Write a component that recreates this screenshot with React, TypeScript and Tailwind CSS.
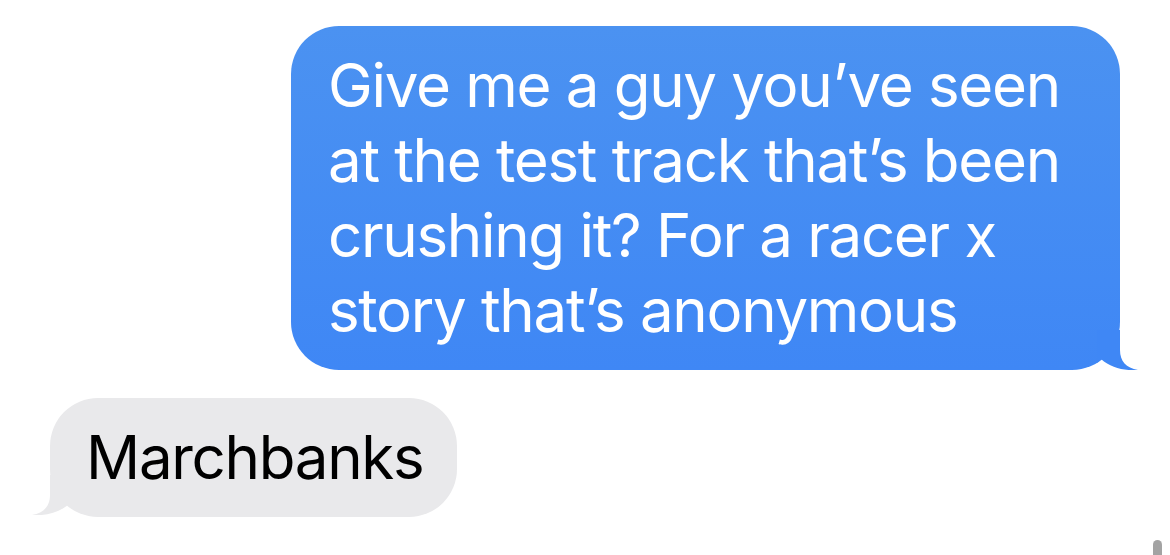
import React from 'react';

const BlueTail: React.FC = () => (
  <svg
    className="absolute bottom-0 right-[-18px]"
    width="41"
    height="40"
    viewBox="0 0 41 40"
  >
    <path d="M23 0 L23 20 C23 31 29 38 41 40 C28 41 14 38 4 29 L0 33 L0 0 Z" fill="#3f87f5" />
  </svg>
);

const GrayTail: React.FC = () => (
  <svg
    className="absolute bottom-[2px] left-[-18px]"
    width="41"
    height="40"
    viewBox="0 0 41 40"
  >
    <path d="M18 0 L18 20 C18 31 12 38 0 40 C13 41 27 38 37 29 L41 33 L41 0 Z" fill="#e9e9eb" />
  </svg>
);

const App: React.FC = () => {
  return (
    <div
      className="relative w-[1170px] h-[555px] overflow-hidden bg-white"
      style={{ fontFamily: 'Inter, "Noto Sans", sans-serif' }}
    >
      <div className="flex flex-col pt-[26px] px-[50px]">
        {/* outgoing */}
        <div className="flex justify-end">
          <div className="relative w-[829px] whitespace-nowrap rounded-[48px] bg-gradient-to-b from-[#4b92f1] to-[#3f87f5] pl-[37px] pr-[30px] py-[22px] text-white text-[60px] leading-[75px] tracking-[-1.3px]">
            Give me a guy you’ve seen
            <br />
            at the test track that’s been
            <br />
            crushing it? For a racer x
            <br />
            story that’s anonymous
            <BlueTail />
          </div>
        </div>

        {/* incoming */}
        <div className="flex justify-start mt-[28px]">
          <div className="relative whitespace-nowrap rounded-[48px] bg-[#e9e9eb] pl-[36px] pr-[34px] py-[22px] text-black text-[60px] leading-[75px] tracking-[-1.3px]">
            Marchbanks
            <GrayTail />
          </div>
        </div>
      </div>

      {/* scroll indicator */}
      <div className="absolute right-[8px] top-[540px] w-[9px] h-[30px] rounded-full bg-[#a3a3a3]" />
    </div>
  );
};

export default App;
